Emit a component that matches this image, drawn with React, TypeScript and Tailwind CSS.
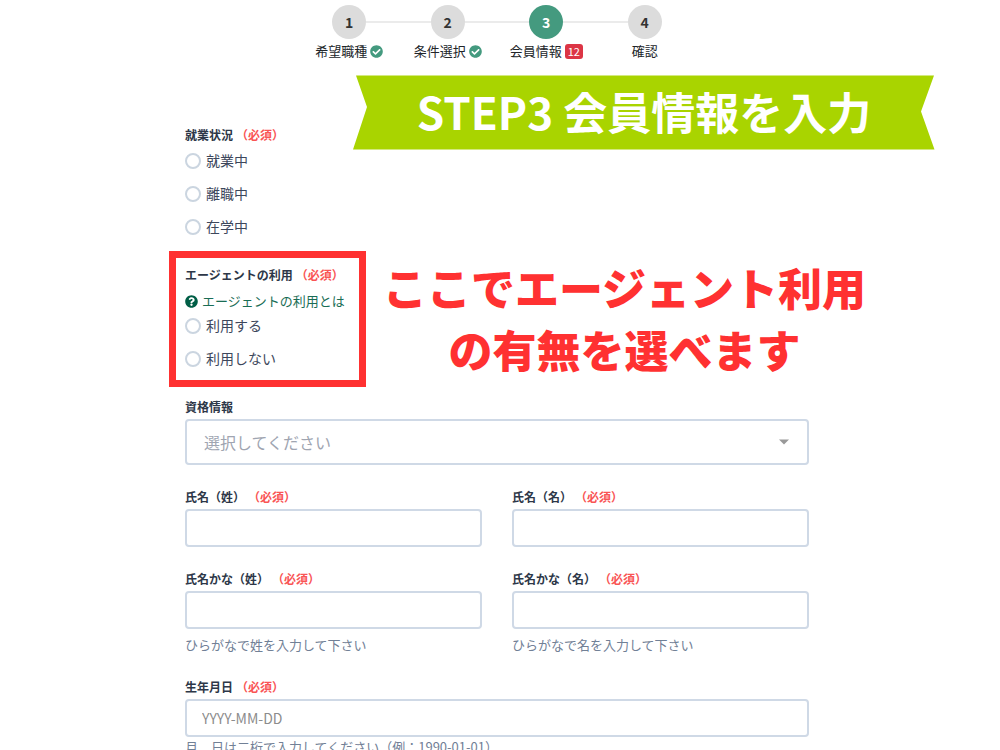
import React, { useState } from 'react';
import { FaCheckCircle, FaQuestionCircle } from 'react-icons/fa';

type Step = { label: string; done?: boolean; active?: boolean; remaining?: number };

const steps: Step[] = [
  { label: '希望職種', done: true },
  { label: '条件選択', done: true },
  { label: '会員情報', active: true, remaining: 12 },
  { label: '確認' },
];

const Stepper: React.FC = () => (
  <ol className="mx-auto flex w-full max-w-[394px]">
    {steps.map((step, index) => (
      <li key={step.label} className="flex flex-1 flex-col items-center">
        <div className="flex w-full items-center">
          <span className={index === 0 ? 'h-0.5 flex-1' : 'h-0.5 flex-1 bg-[#ebebeb]'} />
          <span
            className={
              step.active
                ? 'flex size-[34px] items-center justify-center rounded-full bg-[#449a7f] text-sm font-bold text-white'
                : 'flex size-[34px] items-center justify-center rounded-full bg-[#dcdcdc] text-sm font-bold text-[#333]'
            }
          >
            {index + 1}
          </span>
          <span className={index === steps.length - 1 ? 'h-0.5 flex-1' : 'h-0.5 flex-1 bg-[#ebebeb]'} />
        </div>
        <div className="mt-0.5 flex items-center gap-[3px] whitespace-nowrap text-[13px] leading-5 text-[#212529]">
          {step.label}
          {step.done && <FaCheckCircle className="size-[13px] text-[#449a7f]" />}
          {step.remaining && (
            <span className="flex h-[15px] w-[18px] items-center justify-center rounded-[3px] bg-[#dc3545] text-[11px] text-white">
              {step.remaining}
            </span>
          )}
        </div>
      </li>
    ))}
  </ol>
);

const Required: React.FC = () => <span className="ml-[3px] text-[#f95454]">（必須）</span>;

const RadioList: React.FC<{ name: string; options: string[] }> = ({ name, options }) => {
  const [value, setValue] = useState('');

  return (
    <div className="flex flex-col gap-[11px]">
      {options.map((option) => (
        <label key={option} className="flex items-center gap-[5px] self-start text-sm text-[#3d475c]">
          <input
            type="radio"
            name={name}
            value={option}
            checked={value === option}
            onChange={() => setValue(option)}
            className="size-4 appearance-none rounded-full border-2 border-[#cbd5e0] bg-white checked:border-[5px] checked:border-[#449a7f]"
          />
          <span className="pb-0.5">{option}</span>
        </label>
      ))}
    </div>
  );
};

type FieldProps = { id: string; label: string; placeholder?: string; children?: React.ReactNode };

const TextField: React.FC<FieldProps> = ({ id, label, placeholder, children }) => (
  <div className="flex flex-col">
    <label htmlFor={id} className="mb-[3px] text-xs leading-[18px] font-bold text-[#2d3748]">
      {label}
      <Required />
    </label>
    <input
      id={id}
      type="text"
      placeholder={placeholder}
      className="h-[38px] w-full rounded border-2 border-[#cfd9e6] px-[15px] text-sm text-[#2d3748] placeholder:text-[#8c8c8c]"
    />
    {children}
  </div>
);

const App: React.FC = () => {
  return (
    <div className="h-screen overflow-x-hidden overflow-y-auto bg-white pt-[5px] pr-1.5 font-['Noto_Sans_CJK_JP',sans-serif] [scrollbar-width:none] [text-spacing-trim:space-all]">
      <Stepper />
      <form className="relative mx-auto mt-[65px] flex w-full max-w-[624px] flex-col gap-7">
        <fieldset>
          <legend className="mb-1.5 text-xs leading-[18px] font-bold text-[#2d3748]">
            就業状況
            <Required />
          </legend>
          <RadioList name="status" options={['就業中', '離職中', '在学中']} />
        </fieldset>

        <div className="relative">
          <fieldset>
            <legend className="text-xs leading-[18px] font-bold text-[#2d3748]">
              エージェントの利用
              <Required />
            </legend>
            <a href="#agent" className="mt-[7px] mb-1 flex items-center gap-1 text-[13px] leading-5 text-[#1a6d55]">
              <FaQuestionCircle className="size-[13px] text-[#005e46]" />
              エージェントの利用とは
            </a>
            <RadioList name="agent" options={['利用する', '利用しない']} />
          </fieldset>
          <div className="pointer-events-none absolute -top-[15px] -bottom-[17px] -left-4 w-[197px] border-[7px] border-[#ff3131]" />
        </div>

        <div className="flex flex-col gap-[23px]">
          <div>
            <label htmlFor="license" className="mb-[3px] block text-xs leading-[18px] font-bold text-[#2d3748]">
              資格情報
            </label>
            <div className="relative">
              <select
                id="license"
                defaultValue=""
                className="h-[46px] w-full appearance-none rounded border-2 border-[#cfd9e6] bg-white px-[17px] text-base text-[#a0a5b1]"
              >
                <option value="">選択してください</option>
              </select>
              <svg className="pointer-events-none absolute top-5 right-5 h-[6px] w-[10px]" viewBox="0 0 10 6">
                <path d="M0 0.5h10L5 5.5z" fill="#999" />
              </svg>
            </div>
          </div>

          <div className="grid grid-cols-2 gap-x-[30px] gap-y-[23px]">
            <TextField id="lastName" label="氏名（姓）" />
            <TextField id="firstName" label="氏名（名）" />
            <TextField id="lastKana" label="氏名かな（姓）">
              <p className="mt-1.5 text-[13px] leading-5 text-[#718096]">ひらがなで姓を入力して下さい</p>
            </TextField>
            <TextField id="firstKana" label="氏名かな（名）">
              <p className="mt-1.5 text-[13px] leading-5 text-[#718096]">ひらがなで名を入力して下さい</p>
            </TextField>
          </div>

          <TextField id="birthday" label="生年月日" placeholder="YYYY-MM-DD">
            <p className="text-[13px] leading-5 text-[#718096]">月、日は二桁で入力してください（例：1990-01-01）</p>
          </TextField>
        </div>

        {/* ribbon and callout laid over the form */}
        <div className="absolute -top-[51px] left-[168px] flex h-[75px] w-[582px] items-center justify-center pb-1">
          <svg className="absolute inset-0 size-full" viewBox="0 0 582 75" preserveAspectRatio="none">
            <path d="M3 0.5H581L568 36.5L581.5 74.5H0L14 32z" fill="#a9d400" />
          </svg>
          <h1 className="relative text-[44px] leading-none font-bold whitespace-nowrap text-white">STEP3 会員情報を入力</h1>
        </div>
        <p className="absolute top-[130px] left-[198px] text-center text-[44px] leading-[62px] font-black whitespace-nowrap text-[#ff3131]">
          ここでエージェント利用
          <br />
          の有無を選べます
        </p>
      </form>
    </div>
  );
};

export default App;
